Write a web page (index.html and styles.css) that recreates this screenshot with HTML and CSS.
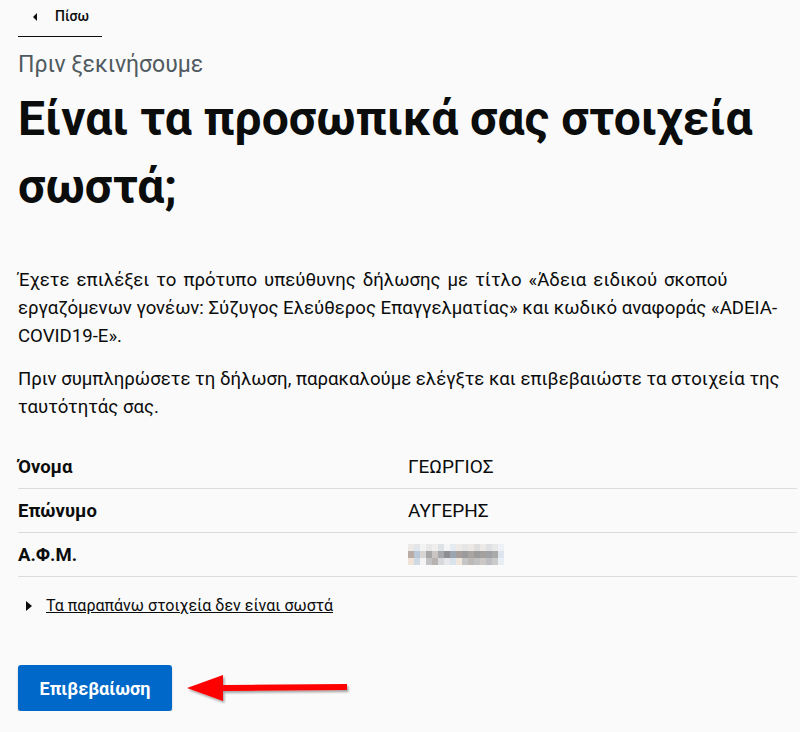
FILE: index.html
```html
<!DOCTYPE html>
<html lang="el">
<head>
<meta charset="utf-8">
<title>Πριν ξεκινήσουμε</title>
<link rel="stylesheet" href="styles.css">
</head>
<body>
<main class="page">
  <nav class="back">
    <a class="back-link" href="#"><span class="tri-left"></span>Πίσω</a>
  </nav>
  <p class="caption">Πριν ξεκινήσουμε</p>
  <h1 class="title">Είναι τα προσωπικά σας στοιχεία σωστά;</h1>
  <p class="text text-intro">Έχετε επιλέξει το πρότυπο υπεύθυνης δήλωσης με τίτλο «Άδεια ειδικού σκοπού εργαζόμενων γονέων: Σύζυγος Ελεύθερος Επαγγελματίας» και κωδικό αναφοράς «ADEIA-COVID19-E».</p>
  <p class="text">Πριν συμπληρώσετε τη δήλωση, παρακαλούμε ελέγξτε και επιβεβαιώστε τα στοιχεία της ταυτότητάς σας.</p>
  <dl class="summary">
    <div class="row"><dt>Όνομα</dt><dd>ΓΕΩΡΓΙΟΣ</dd></div>
    <div class="row"><dt>Επώνυμο</dt><dd>ΑΥΓΕΡΗΣ</dd></div>
    <div class="row"><dt>Α.Φ.Μ.</dt><dd>
      <svg class="blur" width="100" height="21" viewBox="0 0 100 21" aria-label="Α.Φ.Μ.">
        <rect x="0" y="0" width="100" height="21" fill="#fafafa"/>
        <rect x="0" y="0" width="6" height="7" fill="#ece9e6"/>
        <rect x="0" y="7" width="6" height="7" fill="#b9aca4"/>
        <rect x="0" y="14" width="6" height="7" fill="#efe3d8"/>
        <rect x="6" y="0" width="6" height="7" fill="#e2e6ea"/>
        <rect x="6" y="7" width="6" height="7" fill="#b9c8d6"/>
        <rect x="6" y="14" width="6" height="7" fill="#cfd9e3"/>
        <rect x="12" y="0" width="6" height="7" fill="#f3f3f3"/>
        <rect x="12" y="7" width="6" height="7" fill="#d8d6d5"/>
        <rect x="12" y="14" width="6" height="7" fill="#f4f4f4"/>
        <rect x="18" y="0" width="6" height="7" fill="#e8e8e8"/>
        <rect x="18" y="7" width="6" height="7" fill="#a7a7a8"/>
        <rect x="18" y="14" width="6" height="7" fill="#c2c2c4"/>
        <rect x="24" y="0" width="6" height="7" fill="#f0eeec"/>
        <rect x="24" y="7" width="6" height="7" fill="#c9c5c2"/>
        <rect x="24" y="14" width="6" height="7" fill="#b8b3b1"/>
        <rect x="30" y="0" width="6" height="7" fill="#dde2e6"/>
        <rect x="30" y="7" width="6" height="7" fill="#a6a8ab"/>
        <rect x="30" y="14" width="6" height="7" fill="#d6d8db"/>
        <rect x="36" y="0" width="6" height="7" fill="#f5f5f5"/>
        <rect x="36" y="7" width="6" height="7" fill="#8d8f92"/>
        <rect x="36" y="14" width="6" height="7" fill="#e6e8eb"/>
        <rect x="42" y="0" width="6" height="7" fill="#e5ebf1"/>
        <rect x="42" y="7" width="6" height="7" fill="#9aa5b1"/>
        <rect x="42" y="14" width="6" height="7" fill="#d9e3ec"/>
        <rect x="48" y="0" width="6" height="7" fill="#eeeae7"/>
        <rect x="48" y="7" width="6" height="7" fill="#a59e9a"/>
        <rect x="48" y="14" width="6" height="7" fill="#f1e6dc"/>
        <rect x="54" y="0" width="6" height="7" fill="#e6e6e6"/>
        <rect x="54" y="7" width="6" height="7" fill="#9b9b9c"/>
        <rect x="54" y="14" width="6" height="7" fill="#c6c6c7"/>
        <rect x="60" y="0" width="6" height="7" fill="#ebe8e6"/>
        <rect x="60" y="7" width="6" height="7" fill="#a9a5a2"/>
        <rect x="60" y="14" width="6" height="7" fill="#bdb9b6"/>
        <rect x="66" y="0" width="6" height="7" fill="#dedede"/>
        <rect x="66" y="7" width="6" height="7" fill="#9c9c9d"/>
        <rect x="66" y="14" width="6" height="7" fill="#c1c1c2"/>
        <rect x="72" y="0" width="6" height="7" fill="#eceae9"/>
        <rect x="72" y="7" width="6" height="7" fill="#a3a09e"/>
        <rect x="72" y="14" width="6" height="7" fill="#cbc8c6"/>
        <rect x="78" y="0" width="6" height="7" fill="#dfe1e3"/>
        <rect x="78" y="7" width="6" height="7" fill="#a0a2a5"/>
        <rect x="78" y="14" width="6" height="7" fill="#bcbec1"/>
        <rect x="84" y="0" width="6" height="7" fill="#e9e9e9"/>
        <rect x="84" y="7" width="6" height="7" fill="#aaaaab"/>
        <rect x="84" y="14" width="6" height="7" fill="#cbcbcc"/>
        <rect x="90" y="0" width="6" height="7" fill="#eef2f6"/>
        <rect x="90" y="7" width="6" height="7" fill="#dde6ef"/>
        <rect x="90" y="14" width="6" height="7" fill="#e8eef4"/>
      </svg>
    </dd></div>
  </dl>
  <details class="details">
    <summary class="details-summary"><span class="tri-right"></span><span class="details-text">Τα παραπάνω στοιχεία δεν είναι σωστά</span></summary>
  </details>
  <div class="actions">
    <button class="button" type="button">Επιβεβαίωση</button>
    <svg class="arrow" width="170" height="40" viewBox="0 0 170 40" aria-hidden="true">
      <defs>
        <filter id="sh" x="-10%" y="-30%" width="120%" height="160%">
          <feDropShadow dx="1.5" dy="2" stdDeviation="1.2" flood-color="#000" flood-opacity="0.35"/>
        </filter>
      </defs>
      <g filter="url(#sh)">
        <polygon points="2,19 38,6 38,16 162,15 162,21 38,22 38,32" fill="#ff0000"/>
      </g>
    </svg>
  </div>
</main>
</body>
</html>
```

FILE: styles.css
```css
html, body {
  margin: 0;
  padding: 0;
  background: #fafafa;
}

body {
  font-family: Roboto, "Noto Sans", "Liberation Sans", sans-serif;
  color: #0b0c0c;
}

.page {
  padding: 0 3px 0 18px;
}

.back {
  width: 84px;
  border-bottom: 1px solid #0b0c0c;
  padding: 8px 0 11px;
}

.back-link {
  display: flex;
  align-items: center;
  color: #0b0c0c;
  text-decoration: none;
  font-size: 14px;
  line-height: 17px;
  font-weight: 500;
  padding-left: 15px;
}

.tri-left {
  width: 0;
  height: 0;
  border-top: 4px solid transparent;
  border-bottom: 4px solid transparent;
  border-right: 4px solid #0b0c0c;
  margin-right: 18px;
}

.caption {
  margin: 13px 0 0;
  font-size: 23px;
  line-height: 30px;
  color: #505a5f;
}

.title {
  margin: 5px 0 0;
  font-size: 48px;
  line-height: 68px;
  font-weight: 700;
  color: #0b0c0c;
  max-width: 760px;
}

.text {
  margin: 0;
  font-size: 18.6px;
  line-height: 28px;
  color: #0b0c0c;
  max-width: 766px;
}

.text-intro::first-line {
  word-spacing: 2.4px;
}

.title + .text {
  margin-top: 45px;
}

.text + .text {
  margin-top: 15px;
}

.summary {
  margin: 24px 0 0;
}

.row {
  display: flex;
  align-items: center;
  height: 43px;
  border-bottom: 1px solid #dcdcdc;
}

.row dt {
  width: 390px;
  font-size: 18.5px;
  font-weight: 700;
}

.row dd {
  margin: 0;
  font-size: 19px;
  display: flex;
  align-items: center;
}

.blur {
  display: block;
}

.details {
  margin-top: 19px;
}

.details-summary {
  list-style: none;
  display: flex;
  align-items: center;
  font-size: 16px;
  line-height: 20px;
  cursor: pointer;
  padding-left: 8px;
}

.details-summary::-webkit-details-marker {
  display: none;
}

.tri-right {
  width: 0;
  height: 0;
  border-top: 5px solid transparent;
  border-bottom: 5px solid transparent;
  border-left: 6px solid #0b0c0c;
  margin-right: 14px;
}

.details-text {
  text-decoration: underline;
  color: #0b0c0c;
}

.actions {
  display: flex;
  align-items: center;
  margin-top: 49px;
}

.button {
  width: 154px;
  height: 46px;
  background: #0068c8;
  color: #ffffff;
  border: 0;
  border-radius: 3px;
  box-shadow: 0 2px 2px rgba(0, 0, 0, 0.25);
  font-family: Roboto, "Noto Sans", "Liberation Sans", sans-serif;
  font-size: 18px;
  font-weight: 700;
}

.arrow {
  display: block;
  margin-left: 13px;
  margin-top: 2px;
}
```
